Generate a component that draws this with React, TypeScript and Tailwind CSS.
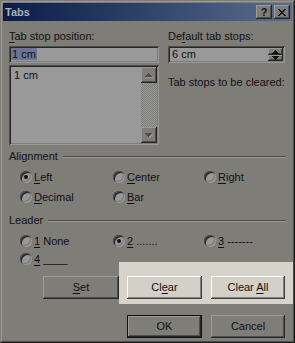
import React from "react";

const raisedDim =
  "bg-[#7f7d78] shadow-[inset_-1px_-1px_0_#262626,inset_1px_1px_0_#999,inset_-2px_-2px_0_#4d4d4d]";
const raisedLit =
  "bg-[#d4d0c8] shadow-[inset_-1px_-1px_0_#404040,inset_1px_1px_0_#ffffff,inset_-2px_-2px_0_#808080]";
const sunken =
  "bg-[#999999] shadow-[inset_1px_1px_0_#4d4d4d,inset_-1px_-1px_0_#999,inset_2px_2px_0_#262626,inset_-2px_-2px_0_#7f7d78]";

function Key({ children }: { children: React.ReactNode }) {
  return <span className="underline underline-offset-[2px]">{children}</span>;
}

function Radio({ checked }: { checked?: boolean }) {
  return (
    <span className="w-[12px] h-[12px] rounded-full bg-[#999] shadow-[inset_1px_1px_0_#4d4d4d,inset_-1px_-1px_0_#999,inset_2px_2px_0_#262626,inset_-2px_-2px_0_#7f7d78] flex items-center justify-center shrink-0">
      {checked && <span className="w-[4px] h-[4px] rounded-full bg-[#111]" />}
    </span>
  );
}

function Option({
  checked,
  children,
  width,
}: {
  checked?: boolean;
  children: React.ReactNode;
  width: string;
}) {
  return (
    <div className={`flex items-center gap-[2px] ${width}`}>
      <Radio checked={checked} />
      <span className="whitespace-pre">{children}</span>
    </div>
  );
}

function GroupLabel({ text }: { text: string }) {
  return (
    <div className="flex items-center h-[13px] w-[277px]">
      <span>{text}</span>
      <div className="flex-1 ml-[5px] border-t border-t-[#4d4d4d] border-b border-b-[#999]" />
    </div>
  );
}

function Arrow({ up, color }: { up?: boolean; color: string }) {
  return (
    <svg width="7" height="4" viewBox="0 0 7 4">
      <path d={up ? "M3 0h1v1h1v1h1v1h1v1H0V3h1V2h1V1h1z" : "M0 0h7v1H6v1H5v1H4v1H3V3H2V2H1V1H0z"} fill={color} />
    </svg>
  );
}

function ScrollButton({ up }: { up?: boolean }) {
  return (
    <div className={`h-[16px] w-[16px] flex items-center justify-center ${raisedDim}`}>
      <div className="relative w-[8px] h-[5px]">
        <div className="absolute left-[1px] top-[1px]">
          <Arrow up={up} color="#999" />
        </div>
        <div className="absolute left-0 top-0">
          <Arrow up={up} color="#4d4d4d" />
        </div>
      </div>
    </div>
  );
}

function Button({
  children,
  lit,
  isDefault,
  width,
}: {
  children: React.ReactNode;
  lit?: boolean;
  isDefault?: boolean;
  width: string;
}) {
  if (isDefault) {
    return (
      <div className={`${width} h-[23px] border border-[#111] flex`}>
        <div className={`flex-1 flex items-center justify-center ${raisedDim}`}>
          <span className="whitespace-pre">{children}</span>
        </div>
      </div>
    );
  }
  return (
    <div className={`${width} h-[23px] flex items-center justify-center ${lit ? raisedLit : raisedDim}`}>
      <span className="whitespace-pre">{children}</span>
    </div>
  );
}

export default function App() {
  return (
    <div className="w-[295px] h-[343px] bg-[#7f7d78] border border-t-[#7f7d78] border-l-[#7f7d78] border-r-[#1c1c1c] border-b-[#1c1c1c] font-['Liberation_Sans',Arial,sans-serif] text-[11px] leading-[13px] text-[#111] select-none overflow-hidden">
      <div className="h-full border border-t-[#999] border-l-[#999] border-r-[#4d4d4d] border-b-[#4d4d4d] p-[1px] flex flex-col">
        {/* title bar */}
        <div className="h-[18px] flex items-center justify-between pl-[2px] pr-[2px] bg-gradient-to-r from-[#0a1b48] to-[#5c6e8d]">
          <span className="font-bold text-[#aab0bd]">Tabs</span>
          <div className="flex gap-[2px]">
            <div className={`w-[16px] h-[14px] flex items-center justify-center font-bold text-[11px] leading-[11px] ${raisedDim}`}>
              ?
            </div>
            <div className={`w-[16px] h-[14px] flex items-center justify-center ${raisedDim}`}>
              <svg width="8" height="7" viewBox="0 0 8 7">
                <path
                  d="M0 0h2v1h1v1h2V1h1V0h2v1H7v1H6v1H5v1h1v1h1v1h1v1H6V6H5V5H3v1H2v1H0V6h1V5h1V4h1V3H2V2H1V1H0z"
                  fill="#111"
                />
              </svg>
            </div>
          </div>
        </div>

        <div className="pl-[6px] flex flex-col">
          {/* positions */}
          <div className="flex mt-[9px]">
            <div className="w-[150px] flex flex-col">
              <div className="h-[13px]">
                <Key>T</Key>ab stop position:
              </div>
              <div className={`mt-[3px] h-[17px] pl-[3px] pt-[2px] ${sunken}`}>
                <span className="bg-[#6d7597] px-[1px] -ml-[1px] leading-[12px] inline-block">1 cm</span>
              </div>
              <div className={`mt-[2px] h-[80px] p-[2px] flex ${sunken}`}>
                <div className="flex-1 pl-[3px] pt-[2px]">1 cm</div>
                <div className="w-[16px] flex flex-col">
                  <ScrollButton up />
                  <div className="flex-1 bg-[repeating-conic-gradient(#999_0_25%,#7f7d78_0_50%)] bg-[length:2px_2px]" />
                  <ScrollButton />
                </div>
              </div>
            </div>

            <div className="w-[117px] ml-[9px] flex flex-col">
              <div className="h-[13px]">
                De<Key>f</Key>ault tab stops:
              </div>
              <div className={`mt-[3px] h-[17px] p-[2px] flex ${sunken}`}>
                <div className="flex-1 pl-[2px] leading-[13px]">6 cm</div>
                <div className="w-[15px] flex flex-col">
                  <div className={`h-[7px] flex items-center justify-center ${raisedDim}`}>
                    <Arrow up color="#111" />
                  </div>
                  <div className={`h-[6px] flex items-center justify-center ${raisedDim}`}>
                    <Arrow color="#111" />
                  </div>
                </div>
              </div>
              <div className="mt-[13px] h-[13px] whitespace-nowrap">Tab stops to be cleared:</div>
            </div>
          </div>

          {/* alignment */}
          <div className="mt-[5px]">
            <GroupLabel text="Alignment" />
          </div>
          <div className="flex pl-[11px] mt-[7px] h-[14px]">
            <Option checked width="w-[93px]">
              <Key>L</Key>eft
            </Option>
            <Option width="w-[91px]">
              <Key>C</Key>enter
            </Option>
            <Option width="w-[80px]">
              <Key>R</Key>ight
            </Option>
          </div>
          <div className="flex pl-[11px] mt-[6px] h-[14px]">
            <Option width="w-[93px]">
              <Key>D</Key>ecimal
            </Option>
            <Option width="w-[91px]">
              <Key>B</Key>ar
            </Option>
          </div>

          {/* leader */}
          <div className="mt-[10px]">
            <GroupLabel text="Leader" />
          </div>
          <div className="flex pl-[11px] mt-[7px] h-[14px]">
            <Option width="w-[93px]">
              <Key>1</Key> None
            </Option>
            <Option checked width="w-[91px]">
              <Key>2</Key> .......
            </Option>
            <Option width="w-[80px]">
              <Key>3</Key> -------
            </Option>
          </div>
          <div className="flex pl-[11px] mt-[4px] h-[14px]">
            <Option width="w-[93px]">
              <Key>4</Key> ____
            </Option>
          </div>

          {/* buttons */}
          <div className="flex items-start -mt-[4px]">
            <div className="ml-[34px] mt-[14px]">
              <Button width="w-[76px]">
                <Key>S</Key>et
              </Button>
            </div>
            <div className="bg-[#d6d3cb] pl-[8px] pr-[8px] pt-[14px] pb-[5px] flex gap-[9px]">
              <Button lit width="w-[75px]">
                Cl<Key>e</Key>ar
              </Button>
              <Button lit width="w-[74px]">
                Clear <Key>A</Key>ll
              </Button>
            </div>
          </div>
          <div className="flex gap-[9px] ml-[118px] mt-[11px]">
            <Button isDefault width="w-[75px]">
              OK
            </Button>
            <Button width="w-[74px]">Cancel</Button>
          </div>
        </div>
      </div>
    </div>
  );
}
